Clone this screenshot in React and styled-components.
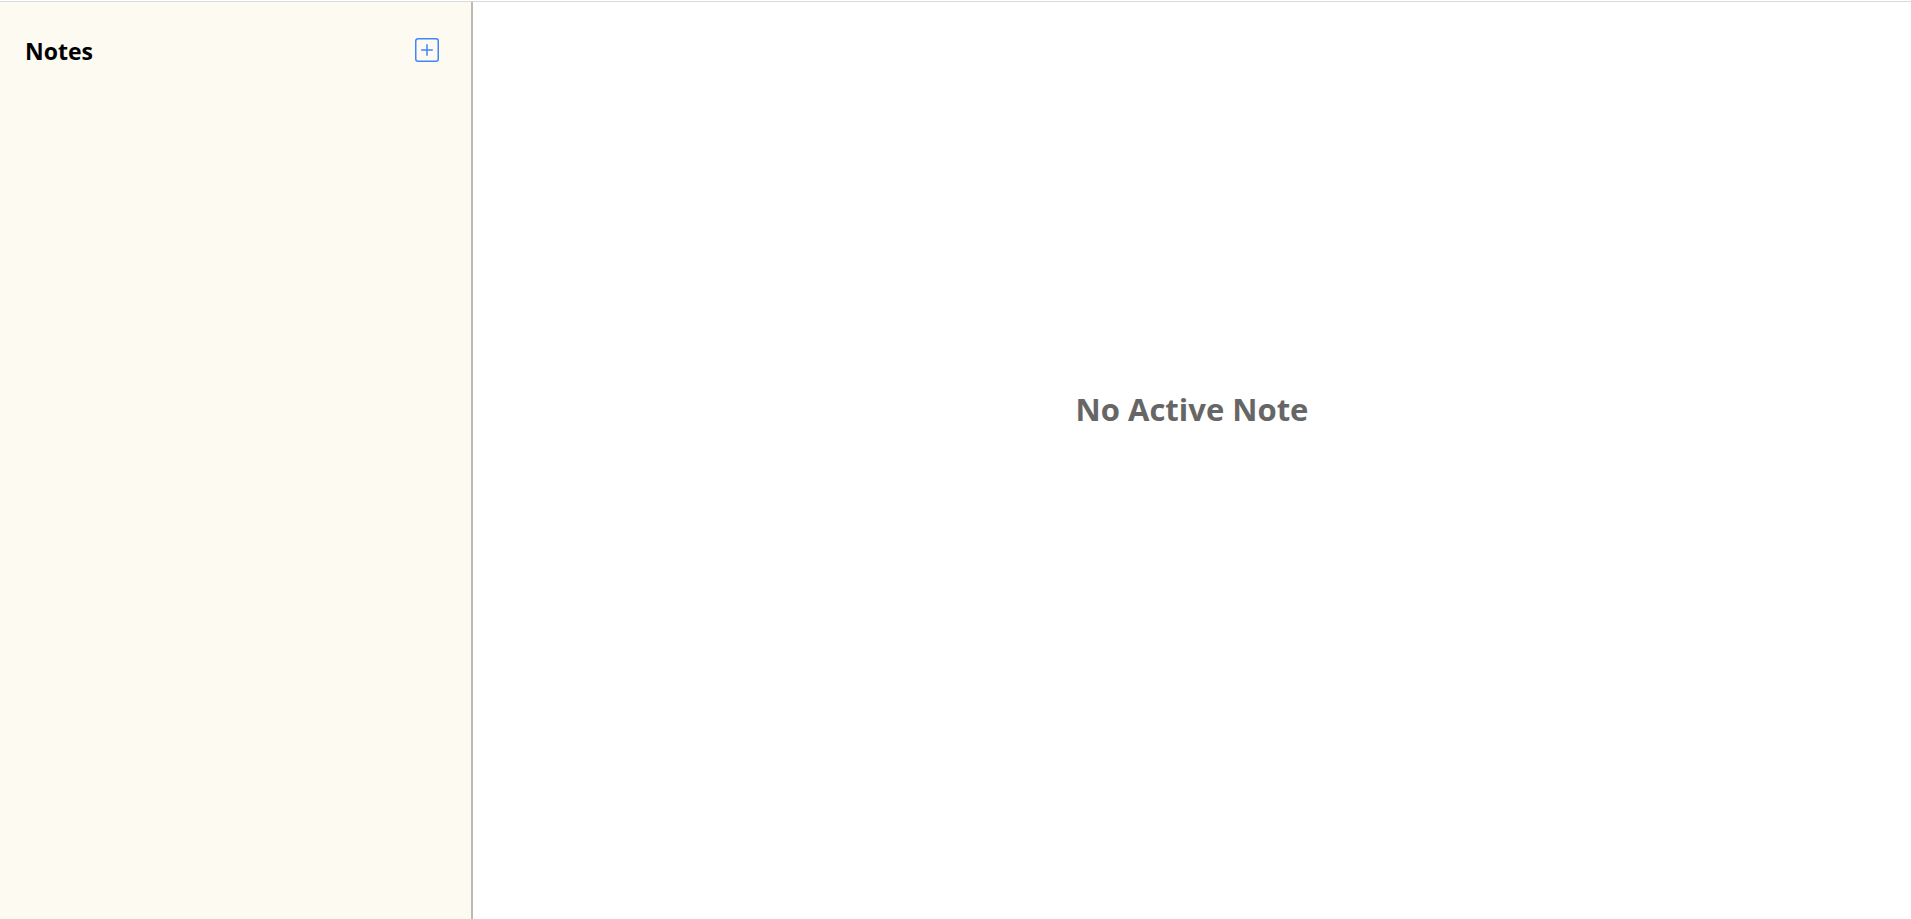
import React from "react";
import styled, { createGlobalStyle } from "styled-components";
import { BsPlusSquare } from "react-icons/bs";

const GlobalStyle = createGlobalStyle`
  * { box-sizing: border-box; }
  body {
    margin: 0;
    background: #fff;
    font-family: "Open Sans", "Noto Sans", sans-serif;
  }
`;

const Page = styled.div`
  display: flex;
  flex-direction: column;
  min-height: 100vh;
  padding-top: 1px;
`;

const Columns = styled.div`
  display: flex;
  flex: 1;
  border-top: 1px solid #d8dbdb;
`;

const Sidebar = styled.aside`
  width: 473px;
  flex: none;
  background: #fdfaf2;
  border-right: 2px solid #bbbbb3;
`;

const SidebarHeader = styled.header`
  display: flex;
  align-items: flex-start;
  justify-content: space-between;
  padding: 33px 32px 0 25px;
`;

const Title = styled.h1`
  margin: 0;
  font-size: 23px;
  line-height: 32px;
  font-weight: 700;
  color: #000;
`;

const AddButton = styled.button`
  display: flex;
  padding: 3px 0;
  border: 0;
  background: none;
  color: #3f86fc;
  cursor: pointer;
`;

const Main = styled.main`
  flex: 1;
  padding-top: 383px;
`;

const EmptyMessage = styled.h2`
  margin: 0;
  text-align: center;
  font-size: 31px;
  line-height: 48px;
  font-weight: 700;
  color: #666;
`;

export default function App() {
  return (
    <>
      <GlobalStyle />
      <Page>
        <Columns>
          <Sidebar>
            <SidebarHeader>
              <Title>Notes</Title>
              <AddButton type="button" aria-label="Add note">
                <BsPlusSquare size={24} />
              </AddButton>
            </SidebarHeader>
          </Sidebar>
          <Main>
            <EmptyMessage>No Active Note</EmptyMessage>
          </Main>
        </Columns>
      </Page>
    </>
  );
}
